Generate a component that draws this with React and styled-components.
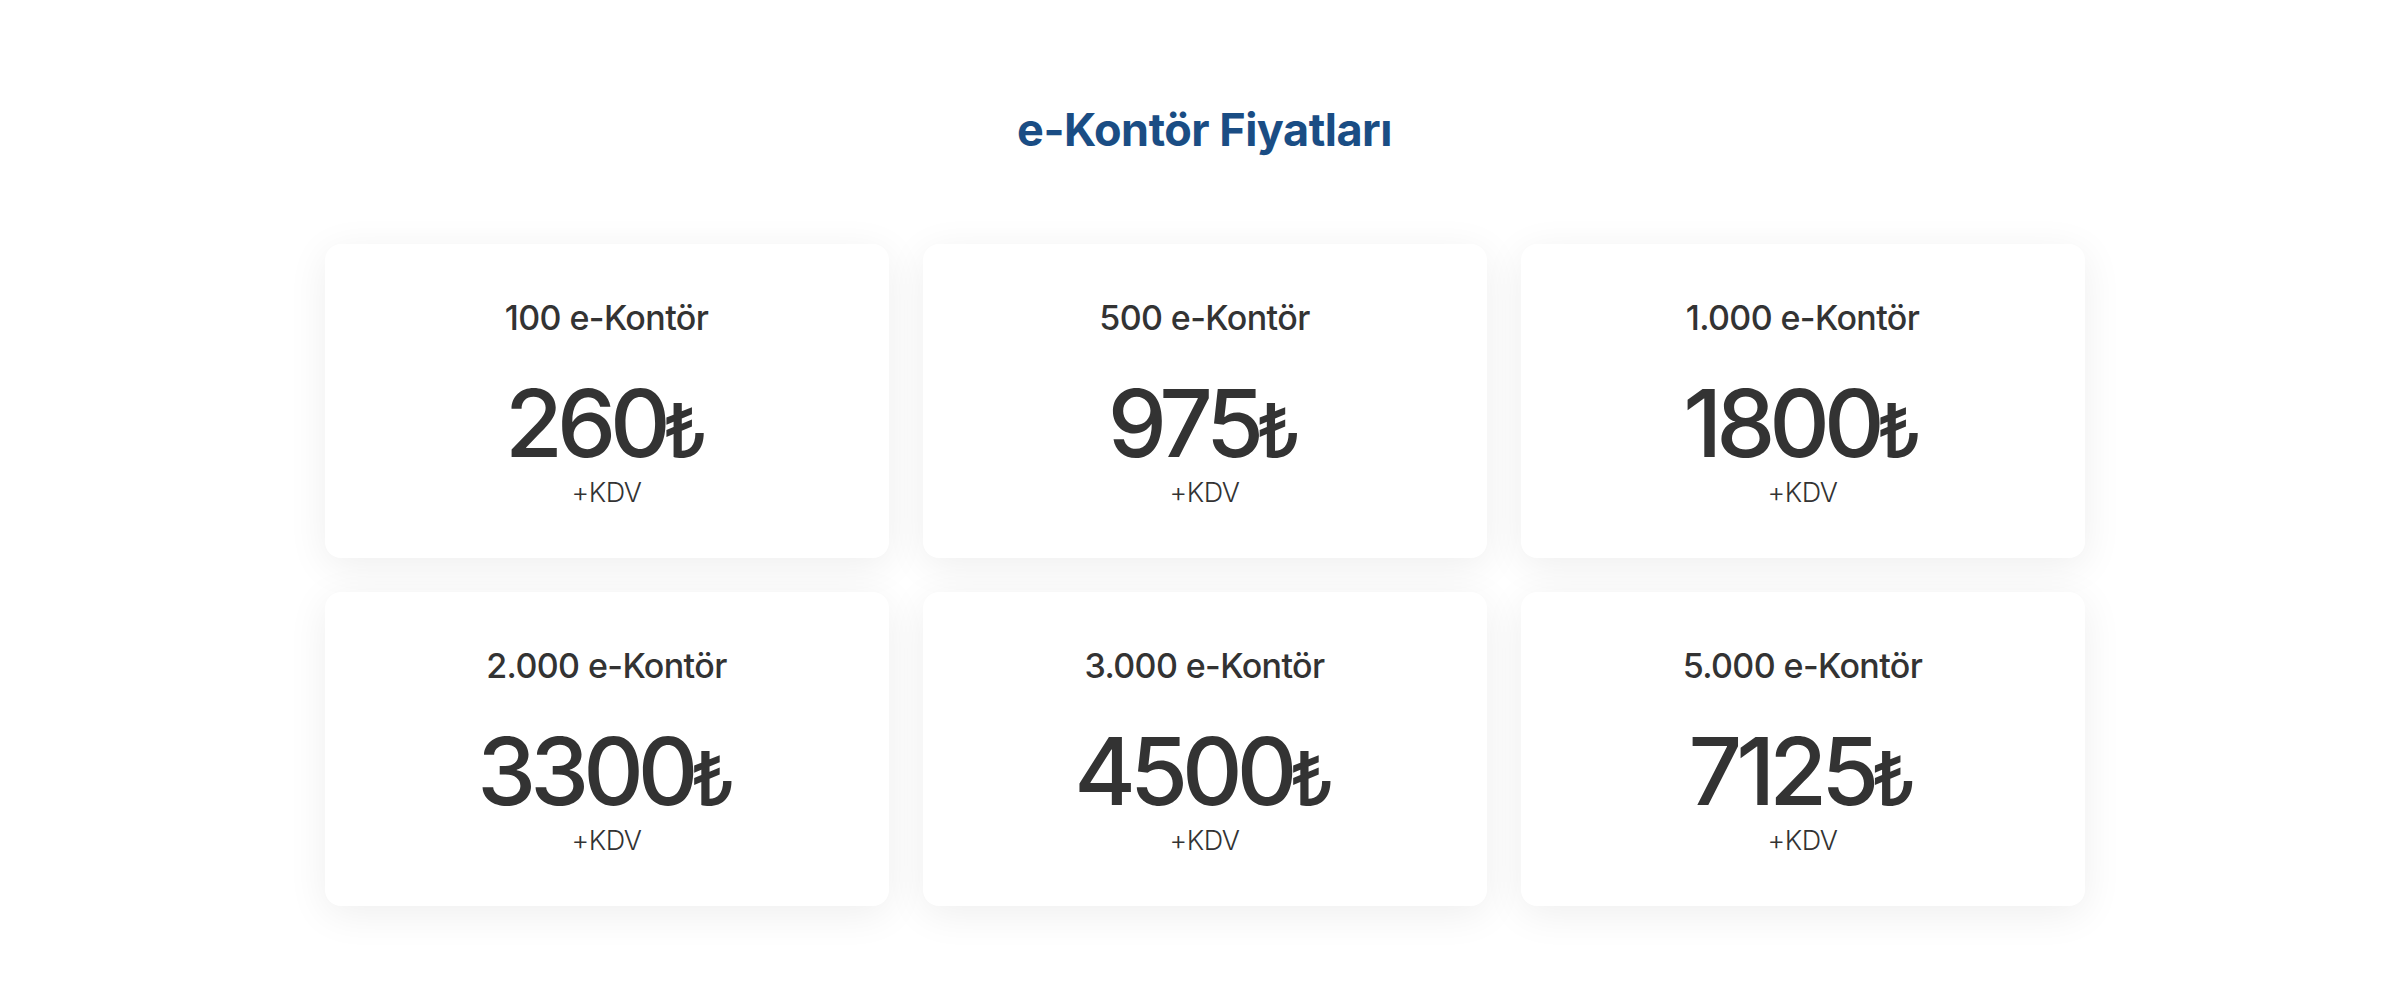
import styled, {createGlobalStyle} from 'styled-components';

const packages = [
    {amount: '100', price: '260'},
    {amount: '500', price: '975'},
    {amount: '1.000', price: '1800'},
    {amount: '2.000', price: '3300'},
    {amount: '3.000', price: '4500'},
    {amount: '5.000', price: '7125'},
];

function App() {
    return (
        <Page>
            <GlobalStyle />
            <Title>e-Kontör Fiyatları</Title>
            <Grid>
                {packages.map(item => (
                    <Card key={item.amount}>
                        <Label>{item.amount} e-Kontör</Label>
                        <Price>
                            {item.price}
                            <Lira>₺</Lira>
                        </Price>
                        <Tax>+KDV</Tax>
                    </Card>
                ))}
            </Grid>
        </Page>
    );
}

const GlobalStyle = createGlobalStyle`
    body {
        margin: 0;
        background: #ffffff;
        font-family: Inter, "Noto Sans", sans-serif;
    }
`;

const Page = styled.div`
    display: flex;
    flex-direction: column;
    align-items: center;
    padding: 107px 0 80px 17px;
`;

const Title = styled.h2`
    margin: 0 0 92px;
    font-size: 45px;
    line-height: 1;
    font-weight: 700;
    letter-spacing: -0.5px;
    color: #1a4d84;
`;

const Grid = styled.div`
    display: grid;
    grid-template-columns: repeat(3, 564px);
    gap: 34px;
`;

const Card = styled.div`
    height: 314px;
    box-sizing: border-box;
    padding-top: 57px;
    display: flex;
    flex-direction: column;
    align-items: center;
    background: #ffffff;
    border-radius: 16px;
    box-shadow: 0 8px 40px rgba(0, 0, 0, 0.07);
    color: #333333;
`;

const Label = styled.div`
    font-size: 34px;
    line-height: 1;
    font-weight: 500;
    letter-spacing: -0.6px;
`;

const Price = styled.div`
    margin-top: 41px;
    font-size: 94px;
    line-height: 1;
    font-weight: 500;
    letter-spacing: -6px;
    display: flex;
    align-items: baseline;
`;

const Lira = styled.span`
    font-size: 74px;
    font-weight: 500;
    letter-spacing: 0;
    margin-left: -2px;
`;

const Tax = styled.div`
    margin-top: 9px;
    font-size: 27px;
    line-height: 1;
    font-weight: 300;
    letter-spacing: -0.5px;
`;

export default App;
